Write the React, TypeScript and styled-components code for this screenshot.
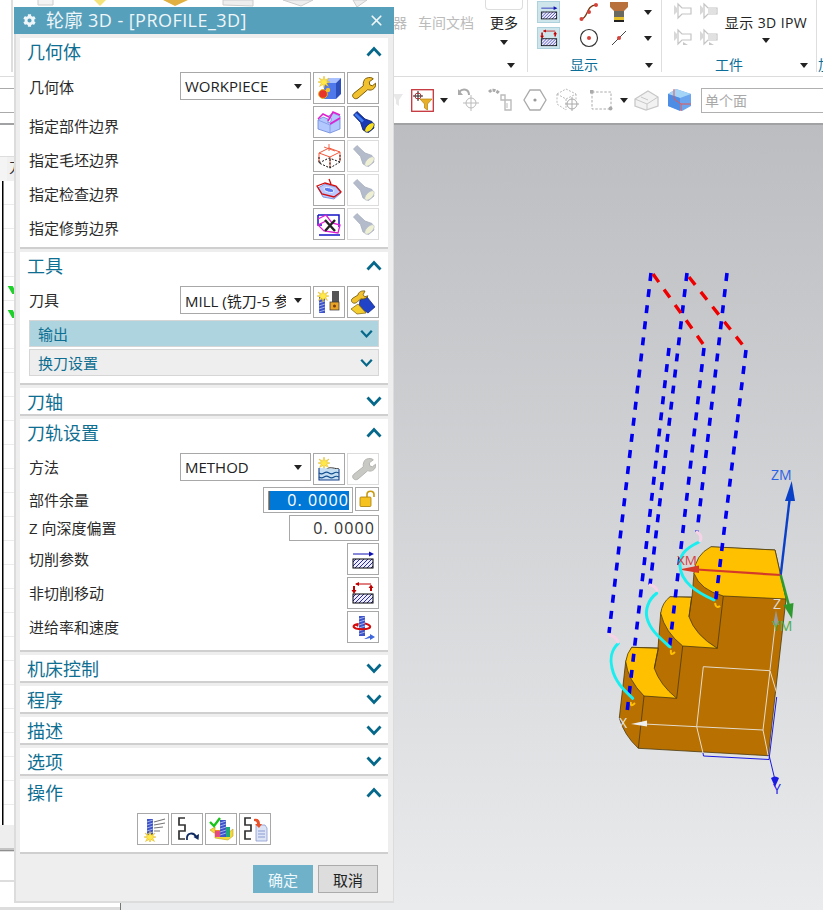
import React from "react";
import styled, { createGlobalStyle } from "styled-components";
import { X } from "lucide-react";
import { FaCog } from "react-icons/fa";

const Global = createGlobalStyle`
  html, body { margin: 0; padding: 0; background: #fff; }
  * { box-sizing: border-box; }
  body { font-family: "Open Sans", "Noto Sans CJK SC", sans-serif; }
`;

const Page = styled.div`
  position: relative;
  width: 823px;
  height: 910px;
  overflow: hidden;
  display: flex;
  flex-direction: column;
  background: #fff;
`;

/* ---------- Ribbon ---------- */
const Ribbon = styled.header`
  height: 77px;
  flex: none;
  display: flex;
  border-bottom: 1px solid #dcdcdc;
  background: #fff;
`;
const RibbonLead = styled.div`
  width: 393px;
  height: 72px;
  flex: none;
  border-left: 11px solid #fff;
  display: flex;
`;
const LeadRule = styled.div`
  width: 2px;
  height: 72px;
  background: #dedede;
  flex: none;
`;
const Crumbs = styled.svg`
  display: block;
  flex: none;
`;
const FileBlock = styled.div`
  width: 135px;
  height: 72px;
  flex: none;
  display: grid;
  grid-template-columns: 92px 38px;
  grid-template-rows: 54px 18px;
  border-right: 1px solid #dedede;
`;
const MutedTools = styled.div`
  display: flex;
  gap: 11px;
  padding-top: 13px;
  font-size: 14px;
  line-height: 20px;
  color: #bbb;
  white-space: nowrap;
`;
const MoreTool = styled.div`
  display: flex;
  flex-direction: column;
  align-items: center;
  font-size: 14px;
  line-height: 20px;
  color: #222;
`;
const MoreBox = styled.div`
  width: 38px;
  height: 10px;
  flex: none;
  margin-bottom: 3px;
  border: 1px solid #ddd;
  border-top: none;
  border-radius: 0 0 4px 4px;
`;
const Caret = styled.span<{ $top?: number }>`
  display: block;
  flex: none;
  width: 0;
  height: 0;
  margin-top: ${(p) => p.$top ?? 0}px;
  border-left: 4.5px solid transparent;
  border-right: 4.5px solid transparent;
  border-top: 5px solid #222;
`;
const GroupCaretCell = styled.div`
  grid-column: 1 / -1;
  display: flex;
  justify-content: flex-end;
  padding: 9px 8px 0 0;
`;
const RibbonGroup = styled.section<{ $w: number }>`
  width: ${(p) => p.$w}px;
  height: 72px;
  flex: none;
  display: flex;
  flex-direction: column;
  border-right: 1px solid #dedede;
`;
const GroupBody = styled.div`
  height: 56px;
  flex: none;
`;
const DisplayGrid = styled(GroupBody)`
  display: grid;
  grid-template-columns: 37px 30px 30px 28px;
  grid-template-rows: 22px 22px;
  row-gap: 4px;
  align-content: start;
  padding: 1px 0 0 9px;
  align-items: center;
  justify-items: center;
`;
const ActiveTool = styled.div`
  justify-self: start;
  width: 23px;
  height: 22px;
  background: #cfe5ec;
  border: 1px solid #aed2dd;
  display: flex;
  align-items: center;
  justify-content: center;
`;
const WorkBody = styled(GroupBody)`
  display: flex;
  padding-left: 12px;
`;
const WorkIcons = styled.div`
  display: grid;
  grid-template-columns: 18px 18px;
  grid-template-rows: 18px 18px;
  gap: 8px 8px;
  padding-top: 2px;
  align-content: start;
`;
const IpwTool = styled.div`
  margin-left: 6px;
  padding-top: 13px;
  width: 84px;
  display: flex;
  flex-direction: column;
  align-items: center;
  font-size: 14px;
  line-height: 20px;
  letter-spacing: 0.4px;
  color: #222;
  white-space: nowrap;
`;
const GroupFoot = styled.div<{ $pad: number }>`
  height: 18px;
  flex: none;
  display: flex;
  align-items: center;
  justify-content: space-between;
  padding: 0 8px 0 ${(p) => p.$pad}px;
  font-size: 14px;
  line-height: 18px;
  color: #0b6e99;
`;
const CutLabel = styled.div`
  width: 6px;
  height: 74px;
  padding-top: 56px;
  overflow: hidden;
  font-size: 14px;
  line-height: 18px;
  color: #0b6e99;
  margin-left: 1px;
`;

/* ---------- Selection toolbar ---------- */
const Toolbar = styled.div`
  height: 48px;
  flex: none;
  display: flex;
  align-items: center;
  border-bottom: 2px solid #a0a2a4;
  background: #fff;
`;
const ToolbarLead = styled.div`
  width: 393px;
  height: 25px;
  flex: none;
  border-top: 1px solid #aaa;
  border-bottom: 1px solid #aaa;
`;
const ToolIcon = styled.svg<{ $gap: number }>`
  display: block;
  flex: none;
  margin-left: ${(p) => p.$gap}px;
`;
const CaretSlot = styled.div<{ $gap: number }>`
  flex: none;
  margin-left: ${(p) => p.$gap}px;
`;
const FilterInput = styled.div`
  width: 122px;
  height: 25px;
  margin-left: 9px;
  flex: none;
  border: 1px solid #b0b0b0;
  border-right: none;
  padding-left: 3px;
  font-size: 14px;
  line-height: 23px;
  color: #a8a8a8;
`;

/* ---------- Main area ---------- */
const Main = styled.main`
  flex: 1;
  min-height: 0;
  display: flex;
`;
const LeftPanel = styled.aside`
  width: 121px;
  flex: none;
  display: flex;
  flex-direction: column;
  border-right: 1px solid #777;
  background: #fff;
`;
const PanelGap = styled.div`
  height: 32px;
  flex: none;
  border-bottom: 1px solid #ddd;
`;
const PanelTabs = styled.div`
  height: 24px;
  flex: none;
  background: #f0f0f0;
  padding-left: 2px;
  border-left: 7px solid #f4f4f4;
  font-size: 14px;
  line-height: 20px;
  color: #333;
  white-space: nowrap;
`;
const PanelTable = styled.div`
  height: 644px;
  flex: none;
  border-left: 2px solid #fff;
  padding-top: 105px;
  background:
    linear-gradient(#000, #000) 0 0 / 1.5px 100% no-repeat,
    repeating-linear-gradient(#fff 0 23px, #ececec 23px 24px);
`;
const Tick = styled.div`
  width: 5px;
  height: 8px;
  margin: 0 0 16px 8px;
  background: #1fd12a;
  transform: skewX(30deg);
`;
const PanelBar = styled.div`
  height: 23px;
  flex: none;
  background: #eeeeee;
`;
const PanelRule = styled.div`
  height: 4px;
  flex: none;
  background: linear-gradient(#c4c4c4 0 2px, #8f8f8f 2px 3px, #ddd 3px);
`;
const PanelBlank = styled.div<{ $h: number }>`
  height: ${(p) => p.$h}px;
  flex: none;
  background: #fff;
`;
const PanelLine = styled.div<{ $h: number }>`
  height: ${(p) => p.$h}px;
  flex: none;
  background: #ddd;
`;
const Viewport = styled.div`
  flex: 1;
  min-width: 0;
  background: linear-gradient(#bcbdc0, #eaebed);
`;
const ModelSvg = styled.svg`
  display: block;
`;

/* ---------- Dialog ---------- */
const Dialog = styled.div`
  position: absolute;
  left: 14px;
  top: 7px;
  width: 380px;
  height: 896px;
  background: #eeeeee;
  border: solid #dcdcdc;
  border-width: 0 1px 2px 2px;
  display: flex;
  flex-direction: column;
`;
const TitleBar = styled.div`
  height: 27px;
  flex: none;
  margin-left: -2px;
  margin-right: -1px;
  background: #57a0bb;
  color: #eef6f9;
  display: flex;
  align-items: center;
  padding: 0 9px 0 9px;
  font-size: 18px;
  line-height: 27px;
`;
const TitleText = styled.span`
  flex: 1;
  margin-left: 10px;
  white-space: nowrap;
  letter-spacing: 0.45px;
`;
const Sections = styled.div`
  display: flex;
  flex-direction: column;
  gap: 3px;
  padding: 4px 5px 0 4px;
`;
const Section = styled.section<{ $open?: boolean }>`
  background: #fff;
  border-bottom: 2px solid #cfcfcf;
  padding-bottom: ${(p) => (p.$open ? 7 : 0)}px;
`;
const SectionHead = styled.div`
  height: 26px;
  display: flex;
  align-items: flex-start;
  justify-content: space-between;
  padding: 0 6px 0 7px;
  font-size: 18px;
  line-height: 29px;
  color: #0f6f92;
  & > svg { align-self: center; }
`;
const SectionBody = styled.div`
  margin-top: 8px;
  padding: 0 9px;
  display: flex;
  flex-direction: column;
  gap: 2px;
`;
const Row = styled.div<{ $h?: number }>`
  height: ${(p) => p.$h ?? 32}px;
  display: flex;
  justify-content: flex-end;
  gap: 2px;
`;
const Label = styled.div<{ $drop?: number; $h?: number }>`
  margin-right: auto;
  padding-top: ${(p) => p.$drop ?? 0}px;
  height: ${(p) => p.$h ?? 32}px;
  font-size: 15px;
  line-height: ${(p) => p.$h ?? 32}px;
  color: #2a2a2a;
  white-space: nowrap;
`;
const Select = styled.div`
  width: 131px;
  height: 28px;
  flex: none;
  border: 1px solid #a8a8a8;
  background: #fff;
  display: flex;
  align-items: center;
  padding: 0 8px 0 4px;
  font-size: 15px;
  color: #222;
`;
const SelectText = styled.span`
  flex: 1;
  min-width: 0;
  overflow: hidden;
  white-space: nowrap;
  margin-right: 8px;
`;
const IconButton = styled.button<{ $off?: boolean }>`
  width: 32px;
  height: 32px;
  flex: none;
  padding: 0;
  background: #fff;
  border: 1px solid ${(p) => (p.$off ? "#dcdcdc" : "#a8a8a8")};
  display: flex;
  align-items: center;
  justify-content: center;
`;
const LockButton = styled(IconButton)`
  width: 24px;
  height: 24px;
`;
const NumberBox = styled.div`
  width: 90px;
  height: 26px;
  flex: none;
  border: 1px solid #a8a8a8;
  background: #fff;
  padding: 0 3px;
  display: flex;
  align-items: center;
  justify-content: flex-end;
  font-size: 16px;
  letter-spacing: 1.1px;
  color: #333;
  white-space: nowrap;
`;
const NumberSelected = styled.span`
  width: 81px;
  height: 19px;
  background: #0078d7;
  border-left: 1px solid #e87a20;
  color: #fff;
  text-align: right;
  line-height: 19px;
`;
const SubSection = styled.div<{ $active?: boolean }>`
  height: 27px;
  border: 1px solid #d6d6d6;
  background: ${(p) => (p.$active ? "#add4df" : "#eeeeee")};
  display: flex;
  align-items: center;
  justify-content: space-between;
  padding: 0 5px 0 8px;
  font-size: 15px;
  color: #0f6f92;
`;
const OpsRow = styled.div`
  margin-top: 8px;
  display: flex;
  justify-content: center;
  gap: 2px;
`;
const Footer = styled.div`
  display: flex;
  justify-content: flex-end;
  gap: 5px;
  padding: 11px 15px 0 0;
`;
const PrimaryButton = styled.button`
  width: 60px;
  height: 28px;
  border: none;
  padding: 0;
  background: #6fb1c9;
  color: #eef7fa;
  font: inherit;
  font-size: 15px;
`;
const CancelButton = styled.button`
  width: 60px;
  height: 28px;
  padding: 0;
  border: 1px solid #ababab;
  background: #dddddd;
  color: #222;
  font: inherit;
  font-size: 15px;
`;

/* ---------- Icons ---------- */
const Chevron = ({ up, small }: { up?: boolean; small?: boolean }) => (
  <svg width={small ? 13 : 16} height={small ? 10 : 11} viewBox="0 0 16 11" fill="none">
    <polyline points={up ? "1.5,9.5 8,2.5 14.5,9.5" : "1.5,1.5 8,8.5 14.5,1.5"} stroke="#05688a" strokeWidth="2.8" />
  </svg>
);

const Icon = ({ children, size = 26 }: { children: React.ReactNode; size?: number }) => (
  <svg width={size} height={size} viewBox="0 0 26 26">{children}</svg>
);

const Star = ({ x, y }: { x: number; y: number }) => (
  <g transform={`translate(${x} ${y})`}>
    <path d="M0-6 1.2-2 5-4 2.6-.8 6 0 2.6 1 4.5 4.5 1 2.4 0 6-1 2.4-4.5 4.5-2.6 1-6 0-2.6-.8-5-4-1.2-2Z" fill="#ffe94a" stroke="#d6a200" strokeWidth=".4" />
  </g>
);

const Hatch = ({ x, y, w, h }: { x: number; y: number; w: number; h: number }) => {
  const lines = [];
  for (let i = 3; i < w + h; i += 4) {
    const x1 = x + Math.max(0, i - h);
    const y1 = y + Math.min(h, i);
    const x2 = x + Math.min(w, i);
    const y2 = y + Math.max(0, i - w);
    lines.push(<line key={i} x1={x1} y1={y1} x2={x2} y2={y2} stroke="#2a2ab0" strokeWidth="1" />);
  }
  return (
    <g>
      <rect x={x} y={y} width={w} height={h} fill="#eef" />
      {lines}
      <rect x={x} y={y} width={w} height={h} fill="none" stroke="#000" strokeWidth="1" />
    </g>
  );
};

const CutParamsIcon = ({ size = 26 }: { size?: number }) => (
  <Icon size={size}>
    <line x1="3" y1="8" x2="20" y2="8" stroke="#1010b0" strokeWidth="1" />
    <path d="M24 8 19 5.5V10.5Z" fill="#1010b0" />
    <Hatch x={3} y={13} w={20} h={9} />
  </Icon>
);
const NonCutIcon = ({ size = 26 }: { size?: number }) => (
  <Icon size={size}>
    <line x1="6" y1="4" x2="21" y2="4" stroke="#c00000" />
    <path d="M5 4 9 2V6Z M3 6H5V11H3Z M20 7H22V11H20Z" fill="#c00000" />
    <path d="M1.5 10 4 14 6.5 10Z M18.5 8 21 4.5 23.5 8Z" fill="#c00000" />
    <Hatch x={3} y={14} w={20} h={9} />
  </Icon>
);
const GeometryIcon = () => (
  <Icon>
    <path d="M8 8 13 3H25L20 8Z" fill="#a9c2ff" />
    <path d="M8 8H20V24H8Z" fill="#4f78ea" />
    <path d="M20 8 25 3V19L20 24Z" fill="#2d4fbc" />
    <Star x={8} y={7} />
    <circle cx="7" cy="19" r="4.4" fill="#e8332a" stroke="#e0b020" strokeWidth="1" />
    <circle cx="12" cy="15" r="2.2" fill="#f2c230" />
  </Icon>
);
const WrenchIcon = ({ off }: { off?: boolean }) => (
  <Icon>
    <path
      d="M16.5 3.2c2.5-1.2 5.2-.8 6.8.6l-4 3 .4 3 2.7 1 3.2-2.6c.4 2.8-.8 5.3-3.2 6.4-1.6.7-3.2.6-4.6 0L8 23c-1.5 1.1-3.6.9-4.7-.5-1.1-1.4-.8-3.1.5-4.2l9.5-7.5c-.4-3 .5-6.1 2.7-7.6Z"
      fill={off ? "#c8c8c4" : "#f2c12e"}
      stroke={off ? "#b4b4b0" : "#7b5c08"}
      strokeWidth="1"
    />
  </Icon>
);
const PartIcon = () => (
  <Icon>
    <path d="M2 11 7 8 12 10V14L15 12.5V9L12 7.5 17 4 24 7V20L14 24 2 20Z" fill="#b2c8ff" stroke="#6b86d6" strokeWidth=".8" />
    <path d="M2 11 14 16V24M14 16 24 10" fill="none" stroke="#7e98e4" strokeWidth=".8" />
    <path d="M2 10 7 5 13 8M12 12 17 3 24 6M14 15 24 9" fill="none" stroke="#e21fd0" strokeWidth="1.6" />
  </Icon>
);
const LightIcon = ({ off }: { off?: boolean }) => (
  <Icon>
    <path d="M3.5 6 7 2.5 15 10 22 12.5 24 19 18.5 23.5 13 21 10.5 13.5Z" fill={off ? "#b4bccb" : "#1739b4"} stroke={off ? "#a6adbc" : "#071a6a"} strokeWidth=".8" />
    {!off && <path d="M6 4 14 11.5 12 13.5 4.5 6Z" fill="#3f7df0" />}
    <ellipse cx="19.5" cy="18.5" rx="6" ry="3" transform="rotate(-45 19.5 18.5)" fill={off ? "#efefd4" : "#f6e021"} stroke={off ? "#b4bccb" : "#071a6a"} strokeWidth=".6" />
  </Icon>
);
const BlankIcon = () => (
  <Icon>
    <path d="M3 10 13 5 24 9 14 14ZM3 10V19M24 9V18M14 14V24" fill="none" stroke="#f1563a" strokeWidth="1" />
    <path d="M13 1V8M8 4 19 8" fill="none" stroke="#f1563a" strokeWidth=".9" />
    <path d="M3 14V20L14 25 24 19V12M14 16V25M3 20 13 15 24 19" fill="none" stroke="#111" strokeWidth="1" strokeDasharray="2 1.5" />
  </Icon>
);
const CheckIcon = () => (
  <Icon>
    <path d="M2 11 9 7 20 10 25 16 18 22 7 20Z" fill="#b9c8ff" stroke="#6b86d6" strokeWidth=".8" />
    <path d="M1 9 9 6 20 9 25 15 18 20 6 17ZM13 2 15 7" fill="none" stroke="#d40c0c" strokeWidth="1.3" />
    <ellipse cx="13" cy="13" rx="5" ry="2.2" transform="rotate(12 13 13)" fill="#5b7af0" stroke="#fff" strokeWidth=".8" />
  </Icon>
);
const TrimIcon = () => (
  <Icon>
    <path d="M2 4H23V16M2 4V14H6M3 24H24" fill="none" stroke="#1414c8" strokeWidth="1.5" />
    <path d="M2 8 10 4 16 12 24 14 22 22 8 20 2 14 10 10" fill="none" stroke="#e01ad0" strokeWidth="1.3" />
    <path d="M9 9 19 20M19 9 9 20" stroke="#222" strokeWidth="2.4" />
  </Icon>
);
const Drill = ({ x, y, h = 18 }: { x: number; y: number; h?: number }) => (
  <g>
    <rect x={x} y={y} width="6" height={h} fill="#3f54c8" />
    {Array.from({ length: Math.floor(h / 3) }, (_, i) => (
      <line key={i} x1={x} y1={y + 3 + i * 3} x2={x + 6} y2={y + 1 + i * 3} stroke="#a8b8f0" strokeWidth=".9" />
    ))}
  </g>
);
const ToolNewIcon = () => (
  <Icon>
    <Drill x={3} y={8} h={16} />
    <Star x={7} y={7} />
    <rect x="16" y="2" width="7" height="11" fill="#555" />
    <rect x="14" y="13" width="9" height="8" fill="#e8a528" stroke="#333" strokeWidth=".7" />
    <circle cx="18.5" cy="17" r="1.5" fill="#7a3c10" />
  </Icon>
);
const ToolEditIcon = () => (
  <Icon>
    <path d="M10 11 17 8 25 18 18 24 9 18Z" fill="#2143c8" stroke="#0a1f78" strokeWidth=".7" />
    <path d="M1 20 8 15 16 24 7 25Z" fill="#f4ce2e" stroke="#7b5c08" strokeWidth=".7" />
    <path d="M15 2c-3-.6-7 1-7 4L3 9c-2 1.2-2 3.4-.5 4.6s3.5.6 4.8-.8l3.7-3c2.6.8 6-.6 7-3l-3.5 1-1.3-2.2Z" fill="#f2c12e" stroke="#6b5208" strokeWidth=".8" />
  </Icon>
);
const MethodIcon = () => (
  <Icon>
    <Star x={8} y={7} />
    <path d="M3 13c3 2 5 2 8 0s5-1 12 0" fill="none" stroke="#111" strokeWidth="1" />
    <path d="M3 12V24H23V13" fill="#c6def2" stroke="#17408a" strokeWidth="1.1" />
    <path d="M3 17c2 1.5 3 1.5 5 0s3-1.5 5 0 3 1.5 5 0 3-1 5 0M3 21c2 1.5 3 1.5 5 0s3-1.5 5 0 3 1.5 5 0 3-1 5 0" fill="none" stroke="#15508f" strokeWidth="1.1" />
  </Icon>
);
const LockIcon = () => (
  <svg width="18" height="18" viewBox="0 0 18 18">
    <path d="M9 7V4.5C9 2.5 10.5 1.2 12.5 1.2S16 2.5 16 4.5V7" fill="none" stroke="#c79a10" strokeWidth="1.6" />
    <rect x="2" y="7" width="11" height="9.5" rx="1" fill="#f5c21f" stroke="#a67c08" strokeWidth=".8" />
  </svg>
);
const FeedIcon = () => (
  <Icon>
    <Drill x={9} y={2} h={20} />
    <path d="M8 10C3 11 2 13 6 14.5c4 1 12 1 14-1 1-2-3-3.5-5-4" fill="none" stroke="#d40c0c" strokeWidth="2" />
    <path d="M9 9 5 11l3 2Z" fill="#d40c0c" />
    <path d="M14 24c3 1 4-2 6-2v-2l5 3-5 3v-2c-2 0-4 2-6 0Z" fill="#3f67dd" />
  </Icon>
);
const GenerateIcon = () => (
  <Icon>
    <Drill x={7} y={3} h={17} />
    <path d="M14 6 25 3M14 9 25 7M14 12 23 11M14 15 20 15" stroke="#777" strokeWidth="1.1" />
    <Star x={10} y={21} />
  </Icon>
);
const Snake = ({ x }: { x: number }) => (
  <path d={`M${x + 6} 2H${x}V9H${x + 6}V15H${x}V23H${x + 6}`} fill="none" stroke="#333" strokeWidth="1.7" />
);
const ReplayIcon = () => (
  <Icon>
    <Snake x={5} />
    <path d="M13 24c-1-8 7-8 9-3" fill="none" stroke="#0f2a60" strokeWidth="1.8" />
    <path d="M24.5 24 25 18 19.5 21Z" fill="#0f2a60" />
  </Icon>
);
const VerifyIcon = () => (
  <Icon>
    <path d="M2 14 7 11V22L20 24 25 20V13L20 17H6Z" fill="#f4d93c" stroke="#c0a010" strokeWidth=".6" />
    <path d="M7 14H20V21H7Z" fill="#ef8a2c" />
    <path d="M7 15h5v6H7Z" fill="#e64a80" />
    <rect x="17" y="11" width="5" height="10" fill="#1fa87a" />
    <Drill x={12} y={4} h={17} />
    <path d="M2 6 6 10 12 2" fill="none" stroke="#18c418" strokeWidth="2.4" />
  </Icon>
);
const ListIcon = () => (
  <Icon>
    <Snake x={3} />
    <path d="M14 9H23L25 12V25H14Z" fill="#dde4f6" stroke="#8a9ad0" strokeWidth=".8" />
    <path d="M16 15H23M16 18H23M16 21H23" stroke="#8a9ad0" strokeWidth="1" />
    <path d="M12 3c4-1 6 1 6 5h2l-3 4-4-4h2c0-2-1-3-3-3Z" fill="#e8502a" />
  </Icon>
);

const Hex = () => (
  <ToolIcon $gap={11} width="24" height="24" viewBox="0 0 24 24" fill="none">
    <path d="M7 2H17L23 12 17 22H7L1 12Z" stroke="#aaa" strokeWidth="1.3" />
    <circle cx="12" cy="12" r="1.6" fill="#999" />
  </ToolIcon>
);

const IconRow = ({ items }: { items: { node: React.ReactNode; off?: boolean }[] }) => (
  <>
    {items.map((it, i) => (
      <IconButton key={i} $off={it.off}>{it.node}</IconButton>
    ))}
  </>
);

const BlueDash = ({ d }: { d: string }) => (
  <path d={d} fill="none" stroke="#0000ee" strokeWidth="3.6" strokeDasharray="8 8.2" />
);
const RedDash = ({ d }: { d: string }) => (
  <path d={d} fill="none" stroke="#ee0000" strokeWidth="3.4" strokeDasharray="10 9" />
);
const Cyan = ({ d }: { d: string }) => (
  <path d={d} fill="none" stroke="#19eef0" strokeWidth="3" strokeLinecap="round" />
);
const Pink = ({ d }: { d: string }) => (
  <path d={d} fill="none" stroke="#f6d3e6" strokeWidth="3" strokeLinecap="round" />
);

const Model = () => (
  <ModelSvg width="702" height="785" viewBox="121 125 702 785" fontFamily="Open Sans, sans-serif">
    <path d="M625.7 661.7 L631.7 647.3 L658 648 L660.7 613 L670 597 L692 597 L694 573 L711 547 L775 550 L786 599 L768.3 755.7 L638.3 748.3 Q624 735 619.3 718 Z" fill="#b87000" stroke="#4a3a10" strokeWidth=".8" />
    <path d="M711 546.7 L775 550 L786 599 L723.3 596 Q700 590 694 573.3 Q695 555 711 546.7Z" fill="#ffc000" stroke="#4a3a10" strokeWidth=".8" />
    <path d="M670 596.7 L691.7 597.3 L689 616.7 Q695 635 717.3 648.3 L682.7 646 Q665 632 660.7 613.3 Q662 603 670 596.7Z" fill="#ffc000" stroke="#4a3a10" strokeWidth=".8" />
    <path d="M631.7 647.3 L658.3 648.3 L654.3 668.3 Q660 685 676.7 698.3 L644 696 Q628 680 625.7 661.7 Q627 653 631.7 647.3Z" fill="#ffc000" stroke="#4a3a10" strokeWidth=".8" />
    <path d="M723.3 596 L717.3 648.3 M682.7 646 L676.7 698.3 M644 696 L638.3 748.3 M691.7 597.3 L689 616.7 M658.3 648.3 L654.3 668.3" fill="none" stroke="#4a3a10" strokeWidth=".8" />
    <BlueDash d="M651 273 L609 633" />
    <BlueDash d="M669 348 L627 713" />
    <BlueDash d="M687 273 L650 585" />
    <BlueDash d="M704 348 L669 652" />
    <BlueDash d="M727 273 L697 532" />
    <BlueDash d="M746 350 L715 606" />
    <RedDash d="M653 274 L704.5 346" />
    <RedDash d="M689 277 L746.7 350" />
    <path d="M703.3 666.7 L770 670.7 L763 730 L696.7 726.7Z M696.7 726.7 L703 753 M770 670.7 L776.7 693 M763 730 L768 755" fill="none" stroke="#e6dccb" strokeWidth="1" />
    <path d="M696.7 726.7 L644 724" stroke="#e6dccb" strokeWidth="1" />
    <path d="M631 724 L647 720.5 L647 726.5Z" fill="#eee" />
    <path d="M770 670 L776 618" stroke="#d8d8d8" strokeWidth="1" />
    <path d="M776 610 L773 625 L779 625Z" fill="#9a9a9a" />
    <path d="M703 753 L703.5 756 L769 759.5 L776.7 697" fill="none" stroke="#1a1ae0" strokeWidth="1" />
    <path d="M769 755 L775 780" stroke="#1a1ae0" strokeWidth="1" />
    <path d="M775 787 L771 778 Q775 775 779 778Z" fill="#1a1ae0" />
    <path d="M780.7 575 L789.5 500" stroke="#0a3fc8" strokeWidth="2.4" />
    <path d="M791.7 481 L785 501 L795 501Z" fill="#0a3fc8" />
    <path d="M780.7 575 L689 569" stroke="#d43a2a" strokeWidth="2.2" />
    <path d="M679 569.5 L699 565.5 L699 573Z" fill="#d43a2a" />
    <path d="M780.7 575 L789 606" stroke="#2e9a2e" strokeWidth="2.6" />
    <path d="M792 619 L783.5 605 L793.5 603Z" fill="#2e9a2e" />
    <Cyan d="M699 542 C684 549 679 556 680 566 C681 582 696 592 714 600" />
    <Cyan d="M656.7 593.3 C648 600 645 610 647 618 C650 630 660 638 670 647" />
    <Cyan d="M618.3 643.3 C611 650 610 660 612 668 C615 682 624 690 632.7 698.3" />
    <Pink d="M697 532 Q703 536 700 541" />
    <Pink d="M650 585 Q655 586 657 590" />
    <Pink d="M610 635 Q616 637 618 642" />
    <path d="M715 603 Q716 609 720 606 M671 650 Q670 657 675 652 M631 702 Q630 708 635 703" fill="none" stroke="#ffc000" strokeWidth="2" />
    <text x="677" y="565" fontSize="13.5" fill="#d44040">XM</text>
    <text x="771" y="480" fontSize="14" fill="#2a62e6">ZM</text>
    <text x="772" y="631" fontSize="14" fill="#4cae4c">YM</text>
    <text x="773" y="609" fontSize="14" fill="#dcdcdc">Z</text>
    <text x="773" y="794" fontSize="14" fill="#1a1ae0">Y</text>
    <text x="619" y="728" fontSize="14" fill="#e8e8e8">X</text>
  </ModelSvg>
);

const WorkShape = ({ lined, stub }: { lined?: boolean; stub?: boolean }) => (
  <svg width="18" height="18" viewBox="0 0 18 18" fill="none">
    <path d="M0 3 3 6V10L0 13Z" fill="#d8d8d8" />
    <path d="M4 2 8 6H17V12H8L4 16Z" stroke="#c4c4c4" strokeWidth="1.2" fill="#fff" />
    {lined && <path d="M8 8H16M8 10H16" stroke="#c4c4c4" strokeWidth="1.2" />}
    {stub && <path d="M9 14 14 17H9Z" fill="#c8c8c8" />}
  </svg>
);

export default function App() {
  return (
    <Page>
      <Global />
      <Ribbon>
        <RibbonLead>
          <LeadRule />
          <Crumbs width="380" height="8" viewBox="12 0 380 8">
            <path d="M37 0V5H52V0" fill="#f4f4f4" stroke="#ccc" />
            <path d="M93 0 99 6 105 0Z" fill="#f4e27a" />
            <path d="M162 0 174 6 187 0Z" fill="#e0b040" />
            <path d="M222 0V5L252 6V0Z" fill="#eee" stroke="#ccc" />
            <path d="M282 0 300 6 312 0Z" fill="#eee" stroke="#ccc" />
            <path d="M352 0 356 7 366 0Z" fill="#eee" stroke="#ccc" />
          </Crumbs>
        </RibbonLead>
        <FileBlock>
          <MutedTools>
            <span>器</span>
            <span>车间文档</span>
          </MutedTools>
          <MoreTool>
            <MoreBox />
            <span>更多</span>
            <Caret $top={7} />
          </MoreTool>
          <GroupCaretCell>
            <Caret />
          </GroupCaretCell>
        </FileBlock>
        <RibbonGroup $w={134}>
          <DisplayGrid>
            <ActiveTool><CutParamsIcon size={20} /></ActiveTool>
            <svg width="20" height="20" viewBox="0 0 20 20" fill="none">
              <path d="M2 17C9 17 7 3 17 3" stroke="#7a3a14" strokeWidth="1.4" />
              <circle cx="2.5" cy="17" r="2" fill="#d5423a" />
              <circle cx="10" cy="10" r="2" fill="#d5423a" />
              <circle cx="17" cy="3" r="2" fill="#d5423a" />
            </svg>
            <svg width="20" height="22" viewBox="0 0 20 22">
              <path d="M1 1H19V6L15 10H5L1 6Z" fill="#b8703c" />
              <rect x="5" y="10" width="10" height="6" fill="#6a6a60" />
              <rect x="5" y="16" width="10" height="3" fill="#e6c02a" />
              <rect x="5" y="19" width="10" height="2" fill="#222" />
            </svg>
            <Caret />
            <ActiveTool><NonCutIcon size={20} /></ActiveTool>
            <svg width="20" height="20" viewBox="0 0 20 20" fill="none">
              <circle cx="10" cy="10" r="8.5" stroke="#333" strokeWidth="1.2" />
              <circle cx="10" cy="10" r="2" fill="#d5423a" />
            </svg>
            <svg width="20" height="20" viewBox="0 0 20 20" fill="none">
              <path d="M3 17 17 3" stroke="#444" strokeWidth="1" />
              <circle cx="10" cy="10" r="2" fill="#d5423a" />
            </svg>
            <Caret />
          </DisplayGrid>
          <GroupFoot $pad={42}>
            <span>显示</span>
            <Caret />
          </GroupFoot>
        </RibbonGroup>
        <RibbonGroup $w={155}>
          <WorkBody>
            <WorkIcons>
              <WorkShape />
              <WorkShape lined />
              <WorkShape stub />
              <WorkShape lined stub />
            </WorkIcons>
            <IpwTool>
              <span>显示 3D IPW</span>
              <Caret $top={5} />
            </IpwTool>
          </WorkBody>
          <GroupFoot $pad={53}>
            <span>工件</span>
            <Caret />
          </GroupFoot>
        </RibbonGroup>
        <CutLabel>加</CutLabel>
      </Ribbon>

      <Toolbar>
        <ToolbarLead />
        <ToolIcon $gap={0} width="10" height="16" viewBox="0 0 10 16" fill="none">
          <path d="M0 2H10L6 8V14L3 12V8Z" fill="#e8e8e8" />
        </ToolIcon>
        <ToolIcon $gap={8} width="23" height="23" viewBox="0 0 23 23" fill="none">
          <rect x=".7" y=".7" width="21.6" height="21.6" fill="#fff" stroke="#c5343a" strokeWidth="1.3" />
          <circle cx="7" cy="7" r="3" stroke="#c5343a" />
          <path d="M7 2V12M2 7H12" stroke="#222" />
          <path d="M9 10H21L16.5 15V21L13.5 19V15Z" fill="#e8b028" stroke="#b5820c" strokeWidth=".7" />
        </ToolIcon>
        <CaretSlot $gap={6}><Caret /></CaretSlot>
        <ToolIcon $gap={9} width="22" height="24" viewBox="0 0 22 24" fill="none">
          <path d="M2 4C6 0 12 1 12 7" stroke="#aaa" strokeWidth="2" />
          <path d="M1 1V7H6Z" fill="#aaa" />
          <circle cx="14" cy="15" r="5" stroke="#bbb" />
          <path d="M14 7V23M6 15H22" stroke="#bbb" />
        </ToolIcon>
        <ToolIcon $gap={9} width="24" height="24" viewBox="0 0 24 24" fill="none">
          <path d="M1 4C4 1 8 2 11 5" stroke="#aaa" strokeWidth="3" strokeDasharray="3 1" />
          <path d="M13 7H17V12H13ZM17 12H23V22H17Z" stroke="#bbb" strokeWidth="1.4" />
          <path d="M19 15V20" stroke="#bbb" />
        </ToolIcon>
        <Hex />
        <ToolIcon $gap={9} width="24" height="24" viewBox="0 0 24 24" fill="none">
          <path d="M1 6 10 1 20 6 10 11ZM1 6V16L10 22M20 6V12M10 11V22" stroke="#bbb" strokeDasharray="2 1.4" />
          <circle cx="16" cy="16" r="5" stroke="#aaa" />
          <path d="M16 9V23M9 16H23" stroke="#aaa" />
        </ToolIcon>
        <ToolIcon $gap={10} width="23" height="21" viewBox="0 0 23 21" fill="none">
          <rect x="2" y="2" width="19" height="17" stroke="#aaa" strokeDasharray="2.5 1.6" />
          <rect x="0" y="0" width="3.5" height="3.5" fill="#aaa" />
          <circle cx="20.5" cy="18.5" r="2" fill="#aaa" />
        </ToolIcon>
        <CaretSlot $gap={7}><Caret /></CaretSlot>
        <ToolIcon $gap={6} width="25" height="22" viewBox="0 0 25 22" fill="none">
          <path d="M1 10 14 2 24 8V17L12 21 1 17Z" fill="#f2f2f2" stroke="#c8c8c8" strokeWidth="1.3" />
          <path d="M1 10 13 15 24 8M13 15V21M7 8 14 11" stroke="#c8c8c8" />
        </ToolIcon>
        <ToolIcon $gap={8} width="25" height="24" viewBox="0 0 25 24">
          <path d="M1 6 9 1 24 6V18L15 23 1 18Z" fill="#6aa5ee" />
          <path d="M1 6 13 10 24 6 9 1Z" fill="#a4d4f6" />
          <path d="M13 10V23L1 18V6Z" fill="#4d8de6" />
          <path d="M7 1V11L14 16H24M14 16V23" fill="none" stroke="#e2585a" strokeWidth="1" />
        </ToolIcon>
        <FilterInput>单个面</FilterInput>
      </Toolbar>

      <Main>
        <LeftPanel>
          <PanelGap />
          <PanelTabs>刀</PanelTabs>
          <PanelTable>
            <Tick />
            <Tick />
          </PanelTable>
          <PanelBar />
          <PanelRule />
          <PanelBlank $h={28} />
          <PanelLine $h={2} />
          <PanelBlank $h={25} />
          <PanelLine $h={3} />
        </LeftPanel>
        <Viewport>
          <Model />
        </Viewport>
      </Main>

      <Dialog>
        <TitleBar>
          <FaCog size={13} />
          <TitleText>轮廓 3D - [PROFILE_3D]</TitleText>
          <X size={17} strokeWidth={2.4} />
        </TitleBar>
        <Sections>
          <Section $open>
            <SectionHead>几何体<Chevron up /></SectionHead>
            <SectionBody>
              <Row>
                <Label $h={30}>几何体</Label>
                <Select><SelectText>WORKPIECE</SelectText><Caret /></Select>
                <IconRow items={[{ node: <GeometryIcon /> }, { node: <WrenchIcon /> }]} />
              </Row>
              <Row>
                <Label $drop={4}>指定部件边界</Label>
                <IconRow items={[{ node: <PartIcon /> }, { node: <LightIcon /> }]} />
              </Row>
              <Row>
                <Label $drop={4}>指定毛坯边界</Label>
                <IconRow items={[{ node: <BlankIcon /> }, { node: <LightIcon off />, off: true }]} />
              </Row>
              <Row>
                <Label $drop={4}>指定检查边界</Label>
                <IconRow items={[{ node: <CheckIcon /> }, { node: <LightIcon off />, off: true }]} />
              </Row>
              <Row>
                <Label $drop={4}>指定修剪边界</Label>
                <IconRow items={[{ node: <TrimIcon /> }, { node: <LightIcon off />, off: true }]} />
              </Row>
            </SectionBody>
          </Section>

          <Section $open>
            <SectionHead>工具<Chevron up /></SectionHead>
            <SectionBody>
              <Row>
                <Label $h={28}>刀具</Label>
                <Select><SelectText>MILL (铣刀-5 参数)</SelectText><Caret /></Select>
                <IconRow items={[{ node: <ToolNewIcon /> }, { node: <ToolEditIcon /> }]} />
              </Row>
              <SubSection $active>输出<Chevron small /></SubSection>
              <SubSection>换刀设置<Chevron small /></SubSection>
            </SectionBody>
          </Section>

          <Section>
            <SectionHead>刀轴<Chevron /></SectionHead>
          </Section>

          <Section $open>
            <SectionHead>刀轨设置<Chevron up /></SectionHead>
            <SectionBody>
              <Row>
                <Label $h={29}>方法</Label>
                <Select><SelectText>METHOD</SelectText><Caret /></Select>
                <IconRow items={[{ node: <MethodIcon /> }, { node: <WrenchIcon off />, off: true }]} />
              </Row>
              <Row $h={26}>
                <Label $h={26}>部件余量</Label>
                <NumberBox><NumberSelected>0. 0000</NumberSelected></NumberBox>
                <LockButton><LockIcon /></LockButton>
              </Row>
              <Row $h={26}>
                <Label $h={26}>Z 向深度偏置</Label>
                <NumberBox>0. 0000</NumberBox>
              </Row>
              <Row>
                <Label $h={33}>切削参数</Label>
                <IconButton><CutParamsIcon /></IconButton>
              </Row>
              <Row>
                <Label $h={33}>非切削移动</Label>
                <IconButton><NonCutIcon /></IconButton>
              </Row>
              <Row>
                <Label $h={33}>进给率和速度</Label>
                <IconButton><FeedIcon /></IconButton>
              </Row>
            </SectionBody>
          </Section>

          <Section><SectionHead>机床控制<Chevron /></SectionHead></Section>
          <Section><SectionHead>程序<Chevron /></SectionHead></Section>
          <Section><SectionHead>描述<Chevron /></SectionHead></Section>
          <Section><SectionHead>选项<Chevron /></SectionHead></Section>

          <Section $open>
            <SectionHead>操作<Chevron up /></SectionHead>
            <OpsRow>
              <IconButton><GenerateIcon /></IconButton>
              <IconButton><ReplayIcon /></IconButton>
              <IconButton><VerifyIcon /></IconButton>
              <IconButton><ListIcon /></IconButton>
            </OpsRow>
          </Section>
        </Sections>
        <Footer>
          <PrimaryButton>确定</PrimaryButton>
          <CancelButton>取消</CancelButton>
        </Footer>
      </Dialog>
    </Page>
  );
}
